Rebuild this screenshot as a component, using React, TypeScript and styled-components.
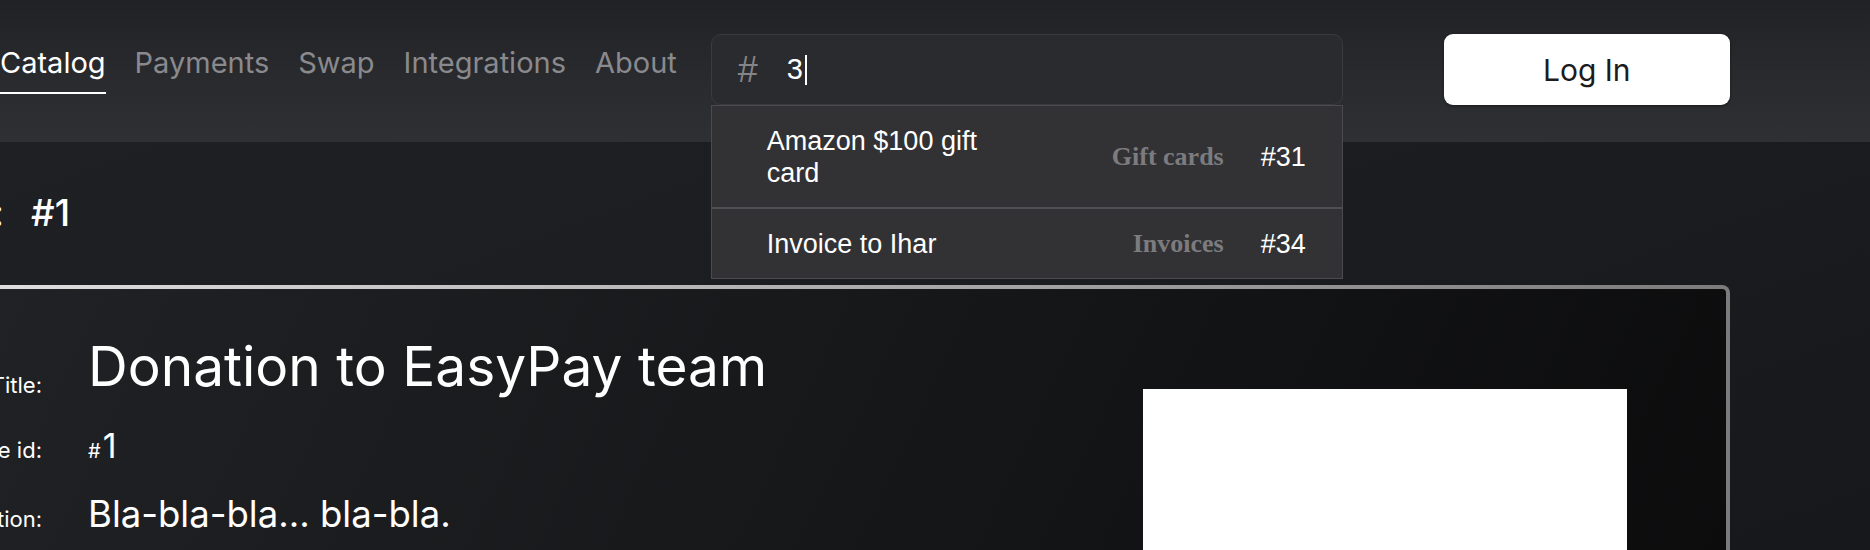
import React from 'react';
import styled, { createGlobalStyle } from 'styled-components';

interface SearchResult {
  id: number;
  name: string;
  category: string;
}

const results: SearchResult[] = [
  { id: 31, name: 'Amazon $100 gift card', category: 'Gift cards' },
  { id: 34, name: 'Invoice to Ihar', category: 'Invoices' },
];

const navItems = ['Catalog', 'Payments', 'Swap', 'Integrations', 'About'];

const GlobalStyle = createGlobalStyle`
  * { box-sizing: border-box; }
  html, body {
    margin: 0;
    padding: 0;
    overflow: hidden;
    background: linear-gradient(160deg, #202124 0%, #1b1c1f 55%, #151618 100%);
  }
  body {
    min-height: 550px;
    font-family: Inter, "Noto Sans", sans-serif;
    color: #fff;
  }
`;

const App: React.FC = () => {
  return (
    <>
      <GlobalStyle />
      <Header>
        <Nav>
          {navItems.map((item, i) => (
            <NavLink key={item} href="#" $active={i === 0}>
              {item}
            </NavLink>
          ))}
        </Nav>
        <SearchWrap>
          <SearchBox>
            <Hash>#</Hash>
            <Query>3</Query>
            <Caret />
          </SearchBox>
          <Dropdown>
            {results.map(r => (
              <Option key={r.id}>
                <OptionName>{r.name}</OptionName>
                <OptionCategory>{r.category}</OptionCategory>
                <OptionId>#{r.id}</OptionId>
              </Option>
            ))}
          </Dropdown>
        </SearchWrap>
        <LoginButton>Log In</LoginButton>
      </Header>
      <Main>
        <Heading>
          <HeadingLabel>Invoice:</HeadingLabel>
          <span>#1</span>
        </Heading>
        <Card>
          <Fields>
            <Field $align="flex-end">
              <FieldLabel>Title:</FieldLabel>
              <TitleValue>Donation to EasyPay team</TitleValue>
            </Field>
            <Field>
              <FieldLabel>Invoice id:</FieldLabel>
              <IdValue>
                <small>#</small>1
              </IdValue>
            </Field>
            <Field>
              <FieldLabel>Description:</FieldLabel>
              <DescValue>Bla-bla-bla... bla-bla.</DescValue>
            </Field>
          </Fields>
          <Preview />
        </Card>
      </Main>
    </>
  );
};

const Header = styled.header`
  height: 142px;
  padding-bottom: 3px;
  display: flex;
  align-items: center;
  background: linear-gradient(180deg, #212225 0%, #2a2b2e 60%, #2f3034 100%);
`;

const Nav = styled.nav`
  display: flex;
  gap: 29px;
`;

const NavLink = styled.a<{ $active?: boolean }>`
  font-size: 29px;
  line-height: 35px;
  padding-bottom: 12px;
  text-decoration: none;
  color: ${p => (p.$active ? '#fff' : '#8a8a8e')};
  border-bottom: 2px solid ${p => (p.$active ? '#fff' : 'transparent')};
`;

const SearchWrap = styled.div`
  position: relative;
  margin-left: 34px;
  width: 632px;
`;

const SearchBox = styled.div`
  height: 71px;
  display: flex;
  align-items: center;
  padding-left: 26px;
  background: #2a2b2e;
  border: 1px solid #3a3b3f;
  border-radius: 10px;
  font-family: "Liberation Sans", Arial, sans-serif;
`;

const Hash = styled.span`
  width: 49px;
  font-size: 36px;
  color: #858588;
`;

const Query = styled.span`
  font-size: 29px;
  color: #fff;
`;

const Caret = styled.span`
  width: 2px;
  height: 30px;
  margin-left: 2px;
  background: #fff;
`;

const Dropdown = styled.ul`
  position: absolute;
  top: 100%;
  left: 0;
  right: 0;
  z-index: 5;
  margin: 0;
  padding: 0;
  list-style: none;
  background: #323235;
  border: 1px solid #4b4b4f;
  font-family: "Liberation Sans", Arial, sans-serif;
`;

const Option = styled.li`
  display: flex;
  align-items: center;
  padding: 19px 36px 18px 55px;

  & + & {
    border-top: 2px solid #4f4f53;
  }
`;

const OptionName = styled.span`
  width: 240px;
  margin-right: auto;
  font-size: 27px;
  line-height: 32px;
  color: #fff;
`;

const OptionCategory = styled.span`
  font-family: "Liberation Serif", "Times New Roman", serif;
  font-weight: bold;
  font-size: 26px;
  color: #7c7c7f;
`;

const OptionId = styled.span`
  margin-left: 37px;
  font-size: 27px;
  color: #fff;
`;

const LoginButton = styled.button`
  margin-left: 101px;
  width: 286px;
  height: 71px;
  border: none;
  border-radius: 9px;
  background: #fff;
  box-shadow: 0 1px 3px rgba(0, 0, 0, 0.45);
  font-family: Inter, sans-serif;
  font-size: 30px;
  color: #1c1c1e;
  cursor: pointer;
`;

const Main = styled.main`
  width: 1870px;
  margin-left: -140px;
  padding-top: 49px;
`;

const Heading = styled.h1`
  display: flex;
  gap: 27px;
  margin: 0 0 50px;
  font-size: 37px;
  line-height: 44px;
  font-weight: 500;
`;

const HeadingLabel = styled.span`
  width: 144px;
  text-align: right;
`;

const Card = styled.section`
  display: flex;
  align-items: flex-start;
  min-height: 420px;
  padding: 44px 99px 0 28px;
  border: 4px solid transparent;
  border-radius: 8px;
  background:
    linear-gradient(115deg, #222326 0%, #18191b 45%, #0b0b0c 100%) padding-box,
    linear-gradient(90deg, #e6e6e6 0%, #b0b0b0 50%, #7b7b7b 100%) border-box;
`;

const Fields = styled.div`
  flex: 1;
  display: flex;
  flex-direction: column;
  gap: 26px;
`;

const Field = styled.div<{ $align?: 'baseline' | 'flex-end' }>`
  display: flex;
  align-items: ${p => p.$align ?? 'baseline'};
  gap: 46px;
`;

const FieldLabel = styled.span`
  width: 150px;
  text-align: right;
  font-size: 22px;
  line-height: 27px;
`;

const TitleValue = styled.span`
  font-size: 55px;
  line-height: 66px;
`;

const IdValue = styled.span`
  font-size: 34px;
  line-height: 41px;

  small {
    font-size: 20px;
    margin-right: 2px;
  }
`;

const DescValue = styled.span`
  font-size: 36.5px;
  line-height: 32px;
`;

const Preview = styled.div`
  width: 484px;
  height: 320px;
  margin-top: 56px;
  background: #fff;
`;

export default App;
